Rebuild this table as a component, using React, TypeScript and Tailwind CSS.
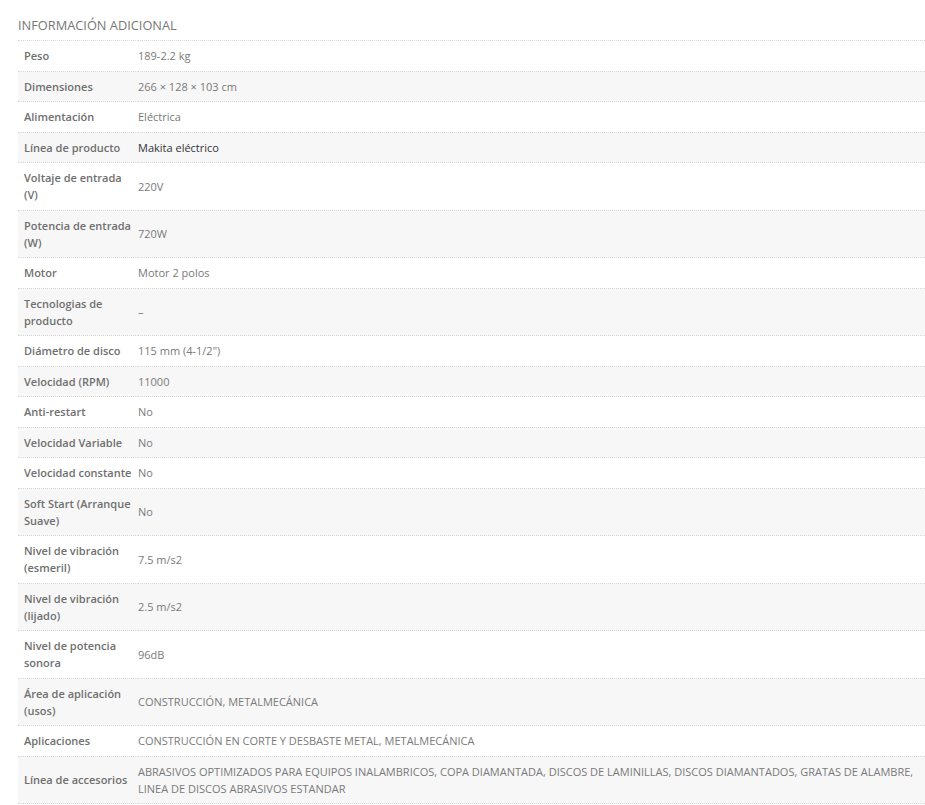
import React from "react";

const rows: [string, string, boolean?][] = [
  ["Peso", "189-2.2 kg"],
  ["Dimensiones", "266 × 128 × 103 cm"],
  ["Alimentación", "Eléctrica"],
  ["Línea de producto", "Makita eléctrico", true],
  ["Voltaje de entrada (V)", "220V"],
  ["Potencia de entrada (W)", "720W"],
  ["Motor", "Motor 2 polos"],
  ["Tecnologias de producto", "–"],
  ["Diámetro de disco", "115 mm (4-1/2\")"],
  ["Velocidad (RPM)", "11000"],
  ["Anti-restart", "No"],
  ["Velocidad Variable", "No"],
  ["Velocidad constante", "No"],
  ["Soft Start (Arranque Suave)", "No"],
  ["Nivel de vibración (esmeril)", "7.5 m/s2"],
  ["Nivel de vibración (lijado)", "2.5 m/s2"],
  ["Nivel de potencia sonora", "96dB"],
  ["Área de aplicación (usos)", "CONSTRUCCIÓN, METALMECÁNICA"],
  ["Aplicaciones", "CONSTRUCCIÓN EN CORTE Y DESBASTE METAL, METALMECÁNICA"],
  [
    "Línea de accesorios",
    "ABRASIVOS OPTIMIZADOS PARA EQUIPOS INALAMBRICOS, COPA DIAMANTADA, DISCOS DE LAMINILLAS, DISCOS DIAMANTADOS, GRATAS DE ALAMBRE, LINEA DE DISCOS ABRASIVOS ESTANDAR",
  ],
];

export default function App() {
  return (
    <div
      className="min-h-[805px] bg-white pl-[18px] pt-[16px]"
      style={{ fontFamily: '"Open Sans", "Liberation Sans", sans-serif' }}
    >
      <h2 className="m-0 h-[24px] text-[12.8px] leading-[18px] font-normal uppercase text-[#777]">
        Información adicional
      </h2>
      <table className="w-full border-collapse border-t border-dotted border-t-[#d9d9d9] leading-[17px]">
        <tbody>
          {rows.map(([label, value, dark], i) => (
            <tr
              key={label}
              className={`border-b border-dotted border-b-[#d9d9d9] ${
                i % 2 === 1 ? "bg-[#f7f7f7]" : "bg-white"
              }`}
            >
              <th className="w-[120px] py-[6.25px] pl-[6px] pr-[6px] text-left align-middle text-[11px] font-semibold text-[#6f6f6f]">
                {label}
              </th>
              <td
                className={`py-[6.25px] pr-0 align-middle text-[11px] ${
                  dark ? "text-[#333]" : "text-[#7a7a7a]"
                }`}
              >
                {value}
              </td>
            </tr>
          ))}
        </tbody>
      </table>
    </div>
  );
}
